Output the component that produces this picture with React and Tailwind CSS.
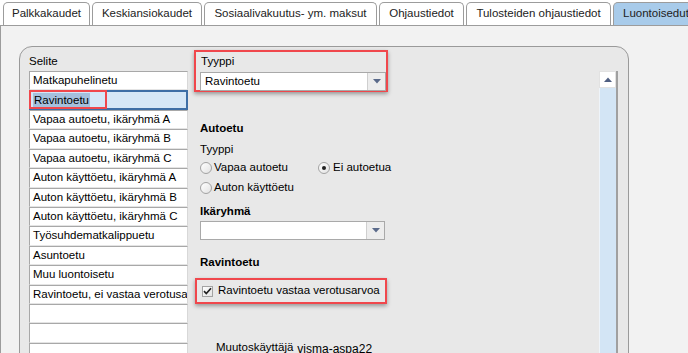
import React from 'react';

const tabs = [
    { label: 'Palkkakaudet', w: 'w-[87px]' },
    { label: 'Keskiansiokaudet', w: 'w-[110px]' },
    { label: 'Sosiaalivakuutus- ym. maksut', w: 'w-[173px]' },
    { label: 'Ohjaustiedot', w: 'w-[85px]' },
    { label: 'Tulosteiden ohjaustiedot', w: 'w-[145px]' },
];

const rows = [
    'Matkapuhelinetu',
    'Ravintoetu',
    'Vapaa autoetu, ikäryhmä A',
    'Vapaa autoetu, ikäryhmä B',
    'Vapaa autoetu, ikäryhmä C',
    'Auton käyttöetu, ikäryhmä A',
    'Auton käyttöetu, ikäryhmä B',
    'Auton käyttöetu, ikäryhmä C',
    'Työsuhdematkalippuetu',
    'Asuntoetu',
    'Muu luontoisetu',
    'Ravintoetu, ei vastaa verotusarvoa',
    '',
    '',
    '',
];

const Caret = () => (
    <svg width="8" height="5" viewBox="0 0 8 5"><path d="M0 0h8L4 4.5z" fill="#5a6a8a" /></svg>
);

const Select = ({ value, w }) => (
    <div className={`flex h-[19px] ${w} bg-white border border-[#a9a9a9]`}>
        <div className="flex-1 pl-[4px] leading-[17px] truncate">{value}</div>
        <div className="w-[18px] flex items-center justify-center bg-[#ededed] border-l border-[#cfcfcf]">
            <Caret />
        </div>
    </div>
);

const Radio = ({ checked }) => (
    <span className="w-[12px] h-[12px] rounded-full border border-[#a3a3a3] bg-gradient-to-br from-[#ffffff] to-[#e2e2e2] flex items-center justify-center shrink-0">
        {checked && <span className="w-[4px] h-[4px] rounded-full bg-[#222]" />}
    </span>
);

const App = () => {
    return (
        <div className="w-[688px] h-[353px] overflow-hidden bg-white flex flex-col text-[11.5px] text-black font-['Liberation_Sans',Arial,sans-serif]">
            {/* tabs */}
            <div className="flex gap-[2px] pl-[3px] pt-[2px] h-[25px] shrink-0">
                {tabs.map((t) => (
                    <div key={t.label} className={`${t.w} h-[23px] shrink-0 rounded-t-[5px] border border-b-0 border-[#9c9c9c] bg-white flex items-center justify-center text-[#222] whitespace-nowrap`}>
                        {t.label}
                    </div>
                ))}
                <div className="w-[90px] h-[23px] shrink-0 rounded-t-[5px] border border-b-0 border-[#9c9c9c] bg-[#a8cbea] flex items-center pl-[9px] text-[#222] whitespace-nowrap">
                    Luontoisedut
                </div>
            </div>

            {/* content */}
            <div className="flex-1 border-t border-l border-[#9c9c9c] bg-[#f2f2f2] pl-[18px] pt-[20px]">
                <div className="w-[610px] h-[400px] rounded-t-[13px] border border-[#9a9a9a] bg-[#e8e8e8] flex pl-[9px]">
                    {/* left list */}
                    <div className="w-[159px] shrink-0">
                        <div className="mt-[7px] mb-[3px] h-[14px] leading-[14px]">Selite</div>
                        <div className="flex flex-col">
                            {rows.map((r, i) =>
                                i === 1 ? (
                                    <div key={i} className="relative h-[19.43px] border-2 border-[#3d6ea6] bg-[#d5e7f7] pl-[2px] flex items-center">
                                        <span className="bg-[#a5c0dd] px-[1px] leading-[14px]">{r}</span>
                                        <div className="absolute -left-[2px] -top-[2px] w-[78px] h-[19px] border-2 border-[#f0474c]" />
                                    </div>
                                ) : (
                                    <div key={i} className="h-[19.43px] border border-t-[#a8a8a8] border-l-[#a8a8a8] border-r-[#d8d8d8] border-b-[#e4e4e4] bg-white pl-[3px] flex items-center whitespace-nowrap overflow-hidden">
                                        {r}
                                    </div>
                                )
                            )}
                        </div>
                    </div>

                    {/* right form */}
                    <div className="w-[194px] ml-[6px] shrink-0 flex flex-col">
                        <div className="mt-[3px] h-[42px] border-2 border-[#f0474c] shadow-[0_2px_4px_rgba(0,0,0,0.35)] pl-[4px] pt-[2px]">
                            <div className="h-[14px] leading-[14px] pl-[1px]">Tyyppi</div>
                            <div className="mt-[4px]">
                                <Select value="Ravintoetu" w="w-[186px]" />
                            </div>
                        </div>

                        <div className="pl-[6px]">
                            <div className="mt-[29px] h-[14px] leading-[14px] font-bold">Autoetu</div>
                            <div className="mt-[7px] h-[14px] leading-[14px]">Tyyppi</div>
                            <div className="mt-[4px] h-[16px] flex items-center whitespace-nowrap">
                                <div className="w-[118px] shrink-0 flex items-center gap-[2px]">
                                    <Radio />
                                    <span>Vapaa autoetu</span>
                                </div>
                                <div className="flex items-center gap-[3px] shrink-0">
                                    <Radio checked />
                                    <span>Ei autoetua</span>
                                </div>
                            </div>
                            <div className="mt-[4px] h-[16px] flex items-center gap-[2px] whitespace-nowrap">
                                <Radio />
                                <span>Auton käyttöetu</span>
                            </div>
                            <div className="mt-[8px] h-[14px] leading-[14px] font-bold">Ikäryhmä</div>
                            <div className="mt-[3px]">
                                <Select value="" w="w-[185px]" />
                            </div>
                            <div className="mt-[15px] h-[14px] leading-[14px] font-bold">Ravintoetu</div>
                        </div>

                        <div className="mt-[9px] ml-[1px] w-[192px] h-[26px] border-2 border-[#f0474c] shadow-[0_2px_4px_rgba(0,0,0,0.35)] flex items-center pl-[5px] gap-[5px] whitespace-nowrap">
                            <span className="w-[11px] h-[11px] shrink-0 border border-[#a3a3a3] bg-gradient-to-br from-white to-[#e4e4e4] flex items-center justify-center">
                                <svg width="9" height="8" viewBox="0 0 9 8"><path d="M1 4.2l2.3 2.3L8 1.3" stroke="#222" strokeWidth="1.7" fill="none" /></svg>
                            </span>
                            <span>Ravintoetu vastaa verotusarvoa</span>
                        </div>

                        <div className="mt-[36px] pl-[22px] flex items-start whitespace-nowrap">
                            <span className="h-[14px] leading-[14px]">Muutoskäyttäjä</span>
                            <span className="ml-[4px] mt-[2px] text-[12px] leading-[14px]">visma-aspa22</span>
                        </div>
                    </div>

                    {/* scrollbar */}
                    <div className="ml-auto mr-[10px] mt-[24px] w-[19px] flex flex-col border-r-2 border-[#a0a0a0]">
                        <div className="h-[17px] bg-white border border-[#e2e2e2] flex items-center justify-center">
                            <svg width="8" height="5" viewBox="0 0 8 5"><path d="M0 5h8L4 0.5z" fill="#4f5f82" /></svg>
                        </div>
                        <div className="flex-1 bg-[#d3e5f5] border-l border-[#eef4fa]" />
                    </div>
                </div>
            </div>
        </div>
    );
};

export default App;
